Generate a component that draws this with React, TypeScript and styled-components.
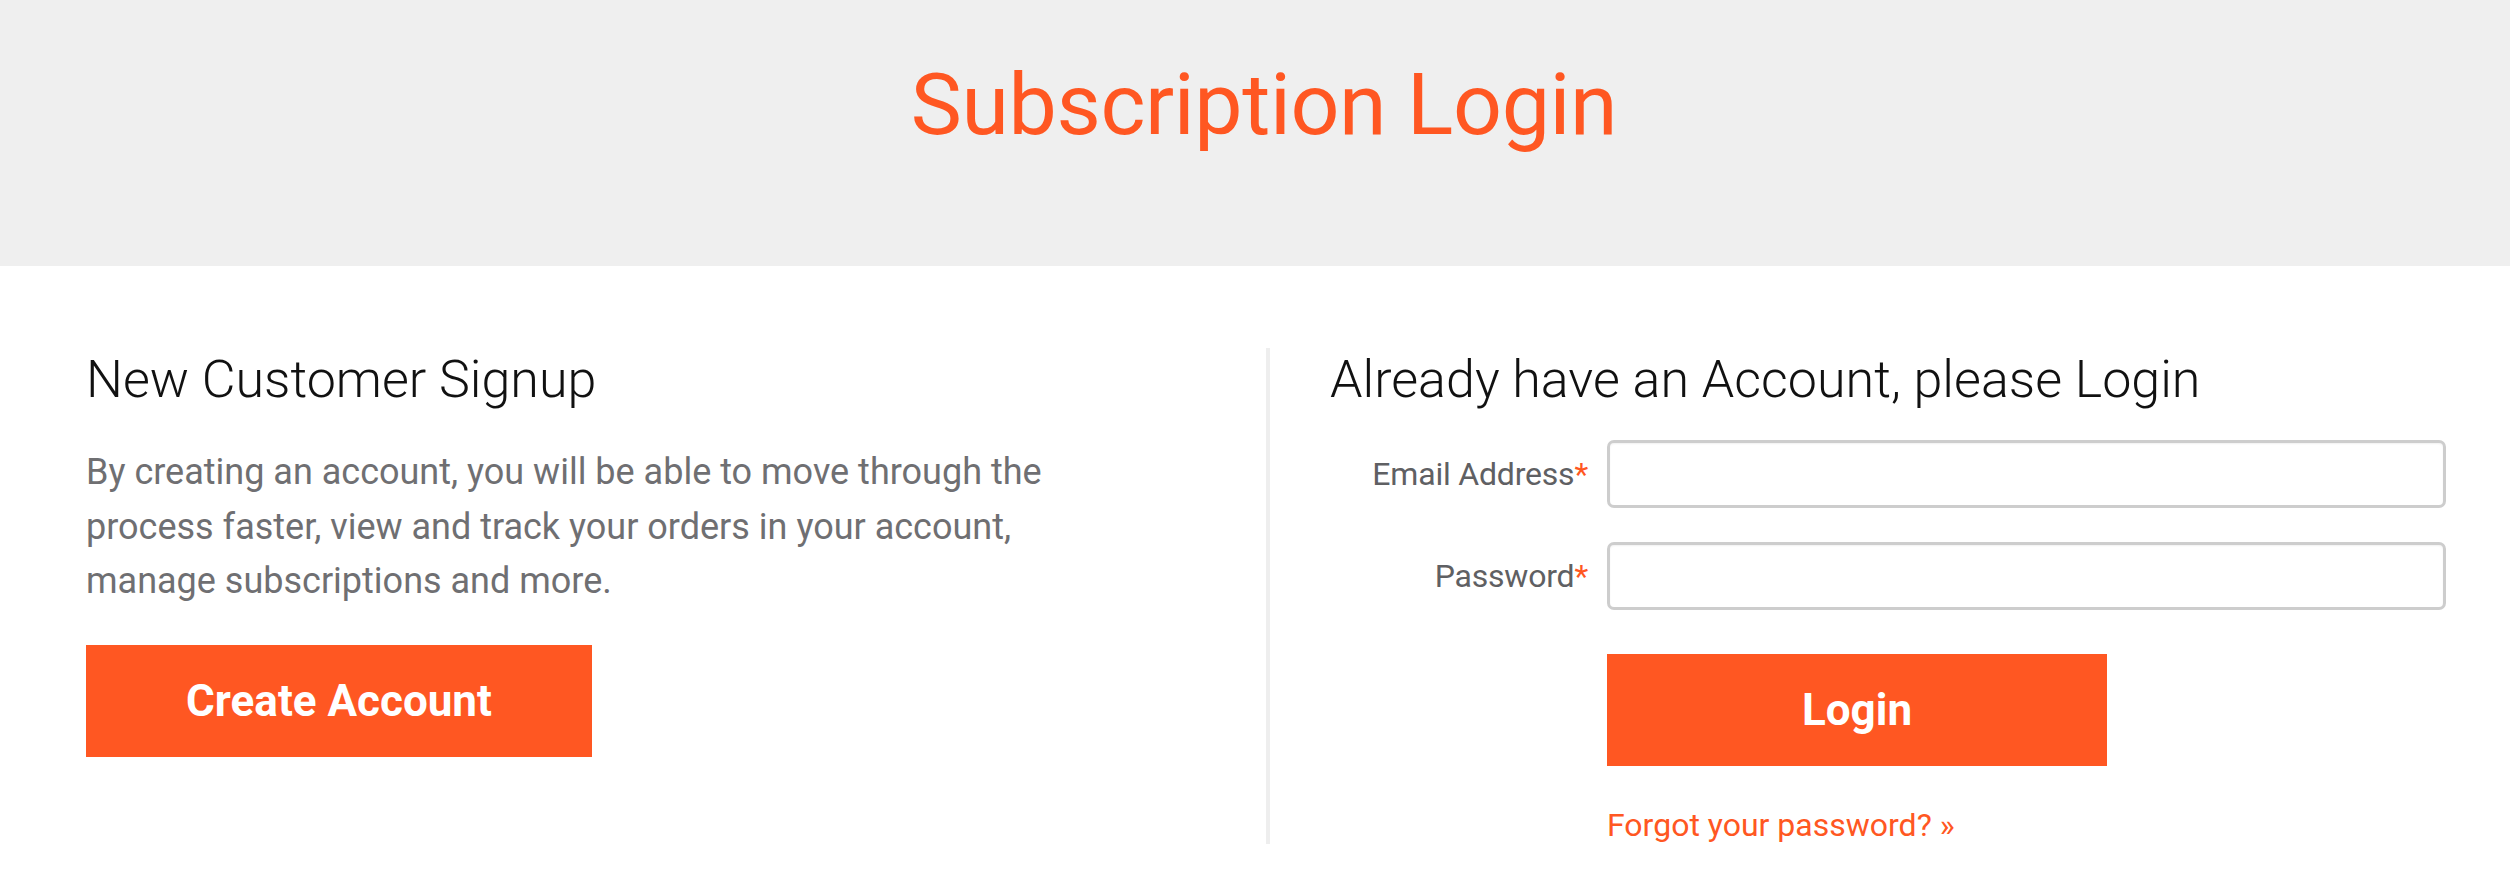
import React from "react";
import styled, { createGlobalStyle } from "styled-components";

const GlobalStyle = createGlobalStyle`
  html, body {
    margin: 0;
    padding: 0;
    background: #ffffff;
    font-family: Roboto, "Liberation Sans", Arial, sans-serif;
  }
  * { box-sizing: border-box; }
`;

const ORANGE = "#ff5722";

const Banner = styled.header`
  height: 266px;
  background: #efefef;
  padding: 55px 0 0 18px;
  text-align: center;
`;

const Title = styled.h1`
  margin: 0;
  font-size: 86px;
  line-height: 100px;
  font-weight: 400;
  color: ${ORANGE};
  letter-spacing: -0.4px;
`;

const Main = styled.main`
  display: grid;
  grid-template-columns: 1180px 1fr;
  padding: 82px 64px 0 86px;
`;

const Column = styled.section<{ $divided?: boolean }>`
  display: flex;
  flex-direction: column;
  align-items: flex-start;
  ${(p) =>
    p.$divided &&
    `
    border-left: 4px solid #eeeeee;
    padding-left: 60px;
  `}
`;

const Heading = styled.h2`
  margin: 0;
  font-size: 52px;
  line-height: 64px;
  font-weight: 300;
  color: #111111;
`;

const Paragraph = styled.p`
  margin: 33px 0 0;
  max-width: 1000px;
  font-size: 36px;
  line-height: 54.5px;
  font-weight: 400;
  color: #6f6f72;
`;

const PrimaryButton = styled.button<{ $width: number; $top: number }>`
  width: ${(p) => p.$width}px;
  height: 112px;
  margin-top: ${(p) => p.$top}px;
  border: none;
  border-radius: 0;
  background: ${ORANGE};
  color: #ffffff;
  font-family: Roboto, "Liberation Sans", Arial, sans-serif;
  font-size: 44px;
  font-weight: 700;
  cursor: pointer;
`;

const Form = styled.form`
  align-self: stretch;
  display: flex;
  flex-direction: column;
  gap: 34px;
  margin-top: 28px;
`;

const FieldRow = styled.div`
  display: grid;
  grid-template-columns: 258px 1fr;
  column-gap: 19px;
  align-items: center;
`;

const Label = styled.label`
  text-align: right;
  font-size: 32px;
  font-weight: 400;
  color: #5f6063;
  letter-spacing: -0.2px;
`;

const Required = styled.span`
  color: ${ORANGE};
`;

const TextInput = styled.input`
  height: 68px;
  width: 100%;
  border: 3px solid #cdcdcd;
  border-radius: 7px;
  background: #ffffff;
  box-shadow: inset 0 1px 2px rgba(0, 0, 0, 0.06);
  font-size: 30px;
  padding: 0 16px;
  outline: none;
`;

const Actions = styled.div`
  display: flex;
  flex-direction: column;
  align-items: flex-start;
  padding-left: 277px;
  margin-top: 44px;
`;

const ForgotLink = styled.a`
  margin-top: 41px;
  font-size: 32px;
  line-height: 37px;
  color: ${ORANGE};
  text-decoration: none;
`;

export default function App() {
  return (
    <>
      <GlobalStyle />
      <Banner>
        <Title>Subscription Login</Title>
      </Banner>
      <Main>
        <Column>
          <Heading>New Customer Signup</Heading>
          <Paragraph>
            By creating an account, you will be able to move through the
            process faster, view and track your orders in your account,
            manage subscriptions and more.
          </Paragraph>
          <PrimaryButton type="button" $width={506} $top={36}>
            Create Account
          </PrimaryButton>
        </Column>
        <Column $divided>
          <Heading>Already have an Account, please Login</Heading>
          <Form onSubmit={(e) => e.preventDefault()}>
            <FieldRow>
              <Label htmlFor="email">
                Email Address<Required>*</Required>
              </Label>
              <TextInput id="email" type="email" />
            </FieldRow>
            <FieldRow>
              <Label htmlFor="password">
                Password<Required>*</Required>
              </Label>
              <TextInput id="password" type="password" />
            </FieldRow>
          </Form>
          <Actions>
            <PrimaryButton type="button" $width={500} $top={0}>
              Login
            </PrimaryButton>
            <ForgotLink href="#">Forgot your password? »</ForgotLink>
          </Actions>
        </Column>
      </Main>
    </>
  );
}
